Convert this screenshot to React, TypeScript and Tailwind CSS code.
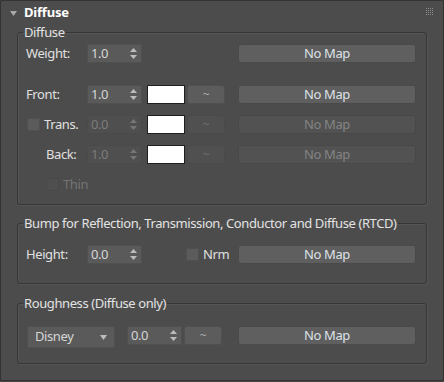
import React from "react";

const font = { fontFamily: '"Noto Sans", "Open Sans", sans-serif' };

function Arrows({ dim }: { dim?: boolean }) {
  const c = dim ? "#767676" : "#bcbcbc";
  return (
    <svg width="7" height="12" viewBox="0 0 7 12" className="shrink-0">
      <path d="M3.5 0 L7 4 L0 4 Z" fill={c} />
      <path d="M0 7 L7 7 L3.5 11 Z" fill={c} />
    </svg>
  );
}

function Spinner({ value, dim, w = "w-[55px]" }: { value: string; dim?: boolean; w?: string }) {
  return (
    <div
      className={`${w} h-[19px] flex items-center justify-between pl-[3px] pr-[4px] border ${
        dim ? "bg-[#4f4f4f] border-[#4a4a4a] text-[#7c7c7c]" : "bg-[#5a5a5a] border-[#505050] text-[#d6d6d6]"
      }`}
    >
      <span>{value}</span>
      <Arrows dim={dim} />
    </div>
  );
}

function Swatch() {
  return <div className="w-[38px] h-[19px] bg-white border border-[#1f1f1f] ml-[5px]" />;
}

function Tilde({ dim }: { dim?: boolean }) {
  return (
    <div
      className={`w-[38px] h-[19px] ml-[2px] rounded-[3px] border flex items-center justify-center text-[12px] ${
        dim ? "bg-[#505050] border-[#4a4a4a] text-[#6f6f6f]" : "bg-[#5c5c5c] border-[#505050] text-[#ababab]"
      }`}
    >
      ~
    </div>
  );
}

function NoMap({ dim }: { dim?: boolean }) {
  return (
    <div
      className={`ml-auto w-[178px] h-[19px] rounded-[3px] border flex items-center justify-center ${
        dim ? "bg-[#525252] border-[#484848] text-[#848484]" : "bg-[#5f5f5f] border-[#4a4a4a] text-[#dde2e8]"
      }`}
    >
      No Map
    </div>
  );
}

function Check({ dim }: { dim?: boolean }) {
  return (
    <div
      className={`w-[13px] h-[13px] shrink-0 border ${
        dim ? "bg-[#4f4f4f] border-[#484848]" : "bg-[#5b5b5b] border-[#505050]"
      }`}
    />
  );
}

function Group({ title, children, className }: { title: string; children: React.ReactNode; className?: string }) {
  return (
    <fieldset
      className={`mx-[16px] border border-[#363636] rounded-[3px] shadow-[inset_1px_1px_0_#555,1px_1px_0_#555] ${className ?? ""}`}
    >
      <legend className="ml-[5px] px-[1px] leading-[16px] text-[#e2e2e2]">{title}</legend>
      {children}
    </fieldset>
  );
}

export default function App() {
  return (
    <div className="w-[444px] h-[382px] bg-[#454545] text-[13px] tracking-[-0.4px]" style={font}>
      <div className="h-[381px] bg-[#4c4c4c] border border-[#333333] rounded-[2px] flex flex-col">
        <div className="h-[23px] flex items-center relative">
          <svg width="7" height="5" viewBox="0 0 7 5" className="ml-[9px] mt-[1px]">
            <path d="M0 0 L7 0 L3.5 5 Z" fill="#a9a9a9" />
          </svg>
          <span className="ml-[7px] font-bold text-white tracking-[-0.2px]">Diffuse</span>
          <svg width="8" height="8" viewBox="0 0 8 8" className="absolute right-[9px] top-[7px]">
            {[0, 2, 4, 6].map((y) =>
              [0, 2, 4, 6].map((x) => <rect key={`${x}-${y}`} x={x} y={y} width="1" height="1" fill="#8d8d8d" />)
            )}
          </svg>
        </div>

        <Group title="Diffuse">
          <div className="pt-[4px] pb-[10px] pl-[8px] pr-[10px] flex flex-col">
            <div className="h-[19px] flex items-center">
              <span className="w-[61px] text-[#e0e0e0]">Weight:</span>
              <Spinner value="1.0" />
              <NoMap />
            </div>
            <div className="h-[19px] flex items-center mt-[22px]">
              <span className="w-[61px] text-[#e0e0e0]">Front:</span>
              <Spinner value="1.0" />
              <Swatch />
              <Tilde />
              <NoMap />
            </div>
            <div className="h-[19px] flex items-center mt-[11px]">
              <span className="w-[61px] flex items-center gap-[4px] pl-[1px] text-[#e0e0e0]">
                <Check />
                Trans.
              </span>
              <Spinner value="0.0" dim />
              <Swatch />
              <Tilde dim />
              <NoMap dim />
            </div>
            <div className="h-[19px] flex items-center mt-[11px]">
              <span className="w-[61px] pl-[20px] text-[#e0e0e0]">Back:</span>
              <Spinner value="1.0" dim />
              <Swatch />
              <Tilde dim />
              <NoMap dim />
            </div>
            <div className="h-[19px] flex items-center mt-[11px] pl-[20px] gap-[4px] text-[#747474]">
              <Check dim />
              Thin
            </div>
          </div>
        </Group>

        <Group title="Bump for Reflection, Transmission, Conductor and Diffuse (RTCD)" className="mt-[10px]">
          <div className="pt-[14px] pb-[19px] pl-[8px] pr-[10px]">
            <div className="h-[19px] flex items-center">
              <span className="w-[61px] text-[#e0e0e0]">Height:</span>
              <Spinner value="0.0" />
              <span className="ml-[44px] flex items-center gap-[4px] text-[#e0e0e0]">
                <Check />
                Nrm
              </span>
              <NoMap />
            </div>
          </div>
        </Group>

        <Group title="Roughness (Diffuse only)" className="mt-[11px]">
          <div className="pt-[15px] pb-[15px] pl-[9px] pr-[10px]">
            <div className="h-[22px] flex items-start">
              <div className="w-[88px] h-[22px] bg-[#5a5a5a] border border-[#505050] flex items-center justify-between pl-[7px] pr-[7px] text-[#d6d6d6]">
                <span>Disney</span>
                <svg width="7" height="5" viewBox="0 0 7 5">
                  <path d="M0 0 L7 0 L3.5 5 Z" fill="#bcbcbc" />
                </svg>
              </div>
              <div className="ml-[12px]">
                <Spinner value="0.0" />
              </div>
              <Tilde />
              <NoMap />
            </div>
          </div>
        </Group>
      </div>
    </div>
  );
}
